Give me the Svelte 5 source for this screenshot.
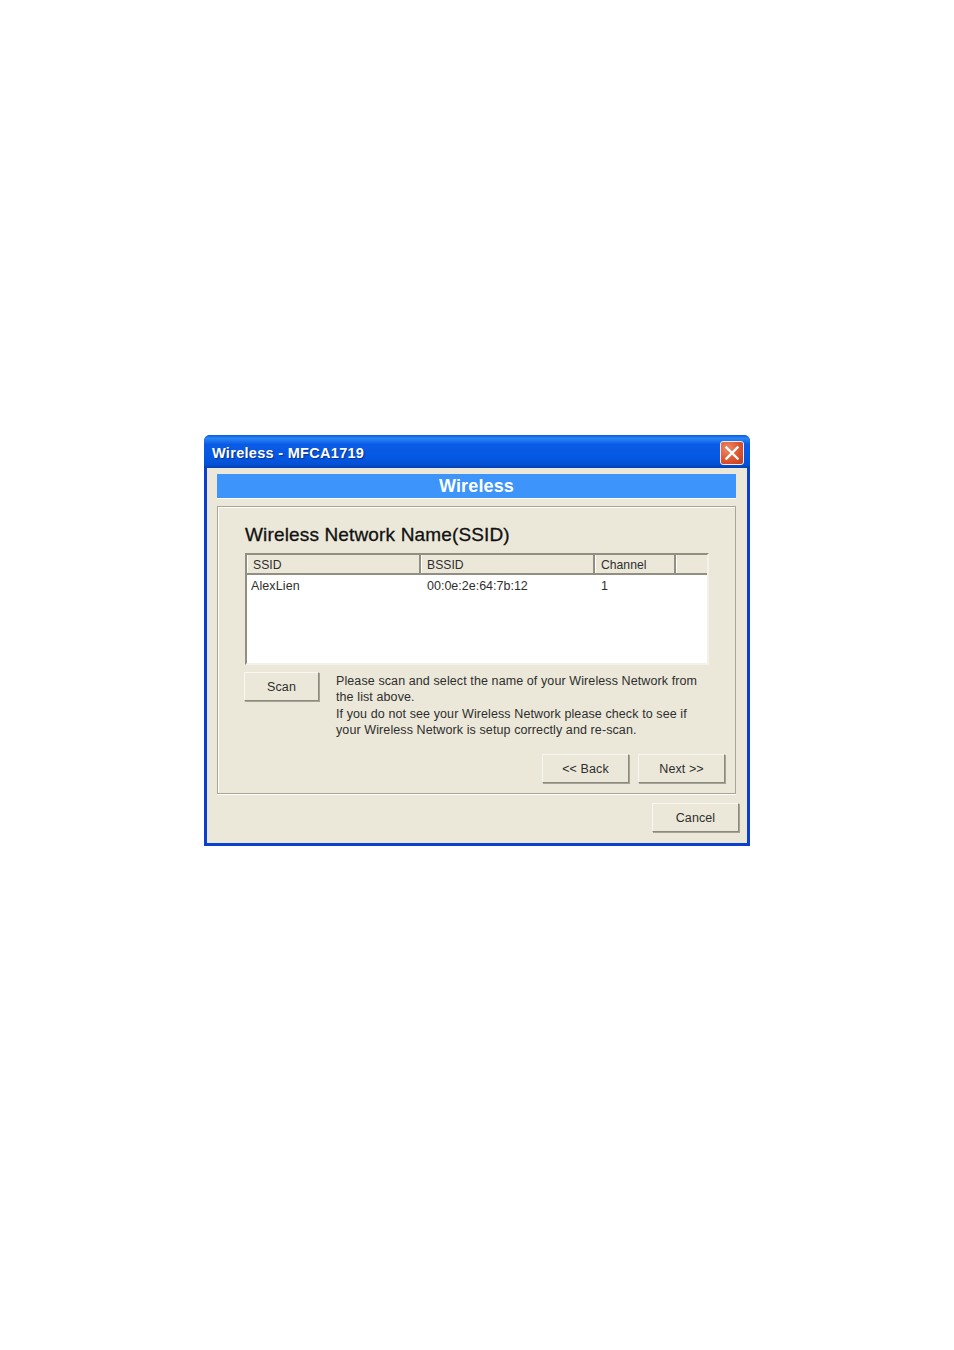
<script>
  const columns = [
    { label: 'SSID', width: 174 },
    { label: 'BSSID', width: 174 },
    { label: 'Channel', width: 81 },
    { label: '', width: 32 }
  ];
  const row = ['AlexLien', '00:0e:2e:64:7b:12', '1'];
</script>

<div class="page">
  <div class="window">
    <div class="titlebar">
      <span class="title">Wireless - MFCA1719</span>
      <div class="close" aria-label="Close">
        <svg viewBox="0 0 24 24" width="24" height="24">
          <path d="M6.5 6.5 L17.5 17.5 M17.5 6.5 L6.5 17.5" stroke="#fff" stroke-width="2.4" stroke-linecap="square" fill="none" />
        </svg>
      </div>
    </div>
    <div class="body">
      <div class="banner">Wireless</div>
      <div class="panel">
        <h1>Wireless Network Name(SSID)</h1>
        <div class="list">
          <div class="head">
            {#each columns as c}
              <div class="th" style="width:{c.width}px">{c.label}</div>
            {/each}
          </div>
          <div class="tr">
            {#each row as v, i}
              <div class="td" style="width:{columns[i].width}px">{v}</div>
            {/each}
          </div>
        </div>
        <div class="scan-row">
          <div class="btn scan">Scan</div>
          <p>Please scan and select the name of your Wireless Network from<br />the list above.<br />If you do not see your Wireless Network please check to see if<br />your Wireless Network is setup correctly and re-scan.</p>
        </div>
        <div class="nav">
          <div class="btn wide">&lt;&lt; Back</div>
          <div class="btn wide">Next &gt;&gt;</div>
        </div>
      </div>
      <div class="foot">
        <div class="btn wide">Cancel</div>
      </div>
    </div>
  </div>
</div>

<style>
  :global(body) {
    margin: 0;
    background: #fff;
  }
  .page {
    height: 1350px;
    box-sizing: border-box;
    padding: 435px 0 0 204px;
    font-family: "Liberation Sans", Arial, sans-serif;
    color: #2e2e2e;
    overflow: hidden;
  }
  .window {
    width: 546px;
    height: 411px;
    box-sizing: border-box;
    display: flex;
    flex-direction: column;
    background: #0a3fd0;
    border-radius: 6px 6px 0 0;
    overflow: hidden;
  }
  .titlebar {
    height: 33px;
    flex: none;
    box-sizing: border-box;
    display: flex;
    align-items: center;
    justify-content: space-between;
    padding: 0 6px 0 8px;
    background: linear-gradient(180deg, #0a5be0 0%, #2a86f4 10%, #0a5ce6 28%, #0457e2 70%, #0350d4 90%, #0340b0 100%);
  }
  .title {
    color: #fff;
    font-weight: 700;
    font-size: 14.5px;
    letter-spacing: 0.3px;
    text-shadow: 1px 1px 1px #0a2f90;
    transform: translateY(1px);
  }
  .close {
    width: 24px;
    height: 24px;
    box-sizing: border-box;
    border: 1px solid #e8eef8;
    border-radius: 3px;
    background: radial-gradient(circle at 30% 30%, #ee8a66, #dc5530 55%, #c23a16);
    display: flex;
    align-items: center;
    justify-content: center;
    transform: translateY(1px);
  }
  .close svg {
    flex: none;
  }
  .body {
    flex: 1;
    margin: 0 3px 3px 3px;
    box-sizing: border-box;
    background: #ebe8d9;
    padding: 6px 11px 0 10px;
    display: flex;
    flex-direction: column;
  }
  .banner {
    height: 24px;
    flex: none;
    background: #3d94fa;
    color: #fff;
    font-weight: 700;
    font-size: 18px;
    letter-spacing: 0.15px;
    line-height: 25px;
    text-align: center;
    box-shadow: 0 1px 0 #fff;
  }
  .panel {
    margin-top: 8px;
    height: 288px;
    flex: none;
    box-sizing: border-box;
    border: 1px solid #a9a696;
    box-shadow: inset 1px 1px 0 #fff, 0 1px 0 #fff;
    padding: 15px 10px 0 27px;
    display: flex;
    flex-direction: column;
  }
  h1 {
    margin: 0;
    font-size: 19px;
    letter-spacing: 0.15px;
    line-height: 25px;
    font-weight: 400;
    -webkit-text-stroke: 0.3px #111;
    color: #111;
  }
  .list {
    margin-top: 6px;
    width: 464px;
    height: 112px;
    flex: none;
    box-sizing: border-box;
    background: #fff;
    border: 2px solid #928f80;
    border-right-color: #f4f2e8;
    border-bottom-color: #f4f2e8;
  }
  .head {
    display: flex;
    height: 18px;
    background: #ebe8d9;
    border-bottom: 2px solid #928f80;
    box-sizing: content-box;
  }
  .th {
    box-sizing: border-box;
    flex: none;
    padding-left: 6px;
    font-size: 12.2px;
    line-height: 20px;
    border-right: 2px solid #928f80;
    box-shadow: inset 1px 0 0 #fff;
  }
  .th:last-child {
    border-right: none;
  }
  .tr {
    display: flex;
    padding-top: 1px;
  }
  .td {
    flex: none;
    box-sizing: border-box;
    padding-left: 4px;
    font-size: 12.5px;
    letter-spacing: 0.1px;
    line-height: 20px;
    white-space: nowrap;
  }
  .td:nth-child(2),
  .td:nth-child(3) {
    padding-left: 6px;
    letter-spacing: 0;
  }
  .scan-row {
    display: flex;
    margin-top: 7px;
    margin-left: -1px;
    align-items: flex-start;
  }
  .btn {
    box-sizing: border-box;
    flex: none;
    height: 29px;
    font-size: 12.5px;
    letter-spacing: 0.1px;
    line-height: 28px;
    text-align: center;
    background: #ebe8d9;
    border: 1px solid;
    border-color: #f8f7f0 #8c8a7c #8c8a7c #f8f7f0;
    box-shadow: 1px 1px 0 #a5a395;
  }
  .scan {
    width: 75px;
  }
  p {
    margin: 0 0 0 17px;
    font-size: 12.5px;
    letter-spacing: 0.1px;
    line-height: 16.3px;
    white-space: nowrap;
    position: relative;
    top: 1px;
  }
  .nav {
    margin-top: 17px;
    display: flex;
    justify-content: flex-end;
    gap: 9px;
  }
  .wide {
    width: 87px;
  }
  .foot {
    margin-top: 9px;
    display: flex;
    justify-content: flex-end;
    margin-right: -3px;
  }
</style>
